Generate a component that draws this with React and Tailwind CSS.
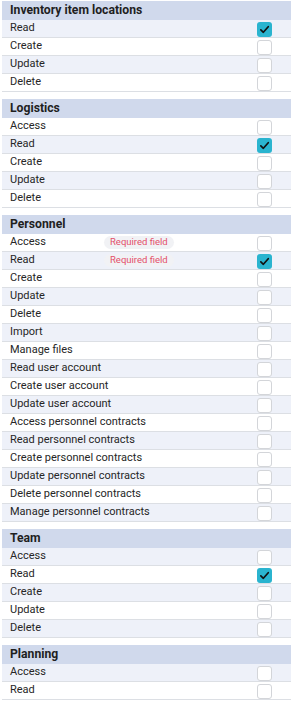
import React from 'react';

const sections = [
    {
        title: 'Inventory item locations',
        rows: [
            { label: 'Read', checked: true },
            { label: 'Create' },
            { label: 'Update' },
            { label: 'Delete' },
        ],
    },
    {
        title: 'Logistics',
        rows: [
            { label: 'Access' },
            { label: 'Read', checked: true },
            { label: 'Create' },
            { label: 'Update' },
            { label: 'Delete' },
        ],
    },
    {
        title: 'Personnel',
        rows: [
            { label: 'Access', required: true },
            { label: 'Read', required: true, checked: true },
            { label: 'Create' },
            { label: 'Update' },
            { label: 'Delete' },
            { label: 'Import' },
            { label: 'Manage files' },
            { label: 'Read user account' },
            { label: 'Create user account' },
            { label: 'Update user account' },
            { label: 'Access personnel contracts' },
            { label: 'Read personnel contracts' },
            { label: 'Create personnel contracts' },
            { label: 'Update personnel contracts' },
            { label: 'Delete personnel contracts' },
            { label: 'Manage personnel contracts' },
        ],
    },
    {
        title: 'Team',
        rows: [
            { label: 'Access' },
            { label: 'Read', checked: true },
            { label: 'Create' },
            { label: 'Update' },
            { label: 'Delete' },
        ],
    },
    {
        title: 'Planning',
        rows: [{ label: 'Access' }, { label: 'Read' }],
    },
];

const Checkbox = ({ checked }) => {
    if (checked) {
        return (
            <span className="mt-[2px] flex h-[15px] w-[15px] items-center justify-center rounded-[3px] bg-[#2ab4cf]">
                <svg width="13" height="13" viewBox="0 0 16 16" fill="none">
                    <path
                        d="M3.5 8.5 L6.6 11.4 L12.6 4.6"
                        stroke="#111"
                        strokeWidth="2.1"
                        strokeLinecap="round"
                        strokeLinejoin="round"
                    />
                </svg>
            </span>
        );
    }
    return (
        <span className="mt-[2px] block h-[15px] w-[15px] rounded-[3px] border border-[#d3d5d9] bg-white" />
    );
};

const App = () => {
    // stripes run over the whole table, headers included
    let idx = 0;

    return (
        <div className="min-h-screen bg-white pt-[1px] pl-[2px] pr-[1px] font-[Roboto,sans-serif] text-[#262626]">
            {sections.map((section) => {
                idx++;
                return (
                    <div key={section.title} className="mb-[7px]">
                        <div className="flex h-[19px] items-center bg-[#d0d9ec] pl-[8px] text-[12.2px] font-bold text-[#1f1f1f]">
                            {section.title}
                        </div>
                        {section.rows.map((row) => {
                            const light = idx % 2 === 1;
                            idx++;
                            return (
                                <div
                                    key={row.label}
                                    className={`flex h-[18px] items-center border-b border-[#dcdfe4] pr-[19px] pl-[8px] text-[11px] ${
                                        light ? 'bg-[#eef1f9]' : 'bg-white'
                                    }`}
                                >
                                    <span className="min-w-[94px] whitespace-nowrap">
                                        {row.label}
                                    </span>
                                    {row.required && (
                                        <span className="flex h-[13px] items-center rounded-full bg-[#f1f2f5] px-[6px] text-[9.5px] text-[#e4506a]">
                                            Required field
                                        </span>
                                    )}
                                    <span className="ml-auto">
                                        <Checkbox checked={row.checked} />
                                    </span>
                                </div>
                            );
                        })}
                    </div>
                );
            })}
        </div>
    );
};

export default App;
